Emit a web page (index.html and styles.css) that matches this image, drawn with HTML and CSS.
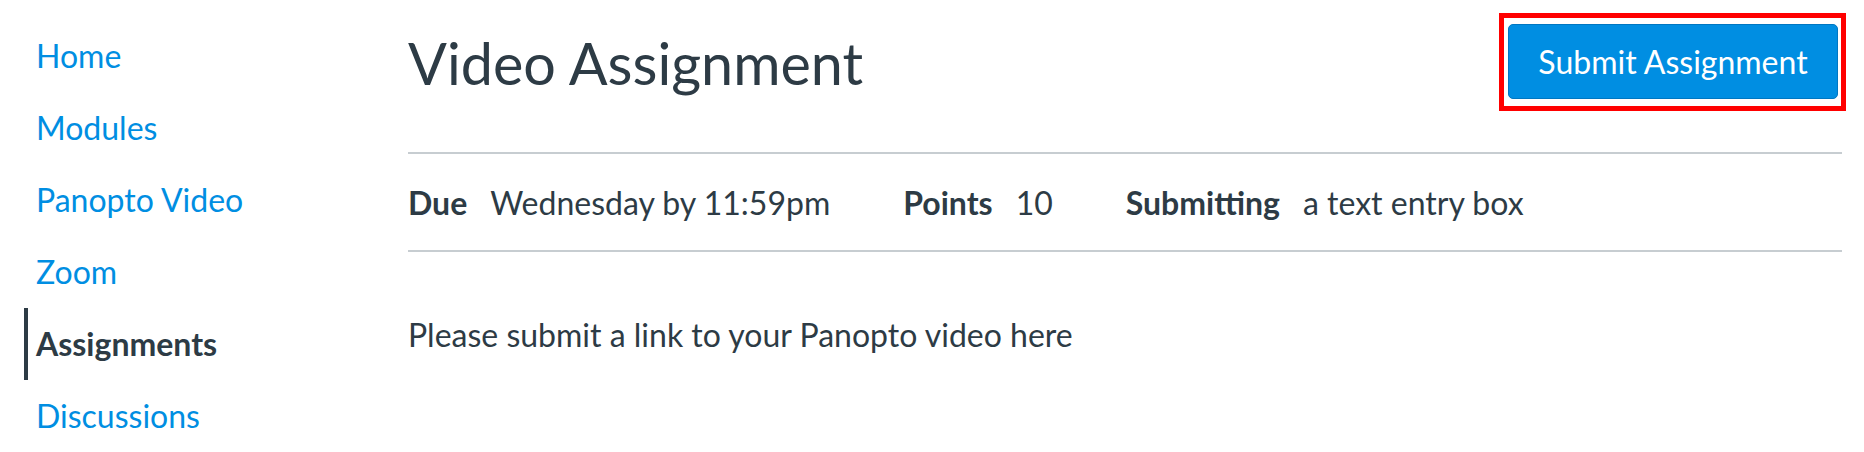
FILE: index.html
```html
<!DOCTYPE html>
<html lang="en">
<head>
<meta charset="utf-8">
<title>Video Assignment</title>
<link rel="stylesheet" href="styles.css">
</head>
<body>
<div class="page">
  <nav class="sidebar">
    <a class="nav-item" href="#">Home</a>
    <a class="nav-item" href="#">Modules</a>
    <a class="nav-item" href="#">Panopto Video</a>
    <a class="nav-item" href="#">Zoom</a>
    <a class="nav-item active" href="#">Assignments</a>
    <a class="nav-item" href="#">Discussions</a>
  </nav>
  <main class="content">
    <header class="header">
      <h1 class="title">Video Assignment</h1>
      <div class="highlight">
        <button class="submit-btn" type="button">Submit Assignment</button>
      </div>
    </header>
    <div class="details">
      <div class="detail"><span class="label">Due</span><span class="value">Wednesday by 11:59pm</span></div>
      <div class="detail"><span class="label">Points</span><span class="value">10</span></div>
      <div class="detail"><span class="label">Submitting</span><span class="value">a text entry box</span></div>
    </div>
    <p class="description">Please submit a link to your Panopto video here</p>
  </main>
</div>
</body>
</html>
```

FILE: styles.css
```css
* { box-sizing: border-box; }

html, body {
  margin: 0;
  padding: 0;
  background: #ffffff;
}

body {
  font-family: Lato, "Noto Sans", sans-serif;
  color: #2d3b45;
  width: 1864px;
  height: 452px;
  overflow: hidden;
}

.page {
  display: flex;
  align-items: flex-start;
}

.sidebar {
  width: 408px;
  flex: none;
  display: flex;
  flex-direction: column;
  padding: 20px 0 0 24px;
}

.nav-item {
  display: block;
  height: 72px;
  line-height: 72px;
  font-size: 32px;
  color: #008ee2;
  text-decoration: none;
  border-left: 4px solid transparent;
  padding-left: 8px;
}

.nav-item.active {
  color: #2d3b45;
  font-weight: 700;
  border-left-color: #2d3b45;
}

.content {
  flex: 1;
  margin-right: 22px;
}

.header {
  display: flex;
  justify-content: space-between;
  align-items: flex-start;
  height: 154px;
  border-bottom: 2px solid #c7cdd1;
}

.title {
  margin: 27px 0 0 0;
  font-size: 57.5px;
  font-weight: 400;
  line-height: 72px;
}

.highlight {
  margin-top: 13px;
  margin-right: -4px;
  border: 5px solid #ff0000;
  padding: 6px 3px 7px 4px;
}

.submit-btn {
  display: block;
  width: 330px;
  height: 75px;
  font-family: Lato, "Noto Sans", sans-serif;
  font-size: 32px;
  color: #ffffff;
  background: #008ee2;
  border: 1px solid #0077c2;
  border-radius: 5px;
  padding: 0;
}

.details {
  display: flex;
  align-items: center;
  gap: 73px;
  height: 98px;
  border-bottom: 2px solid #c7cdd1;
  font-size: 32px;
}

.detail {
  display: flex;
  gap: 23px;
}

.label {
  font-weight: 700;
}

.description {
  margin: 63px 0 0 0;
  font-size: 32px;
  line-height: 40px;
}
```
